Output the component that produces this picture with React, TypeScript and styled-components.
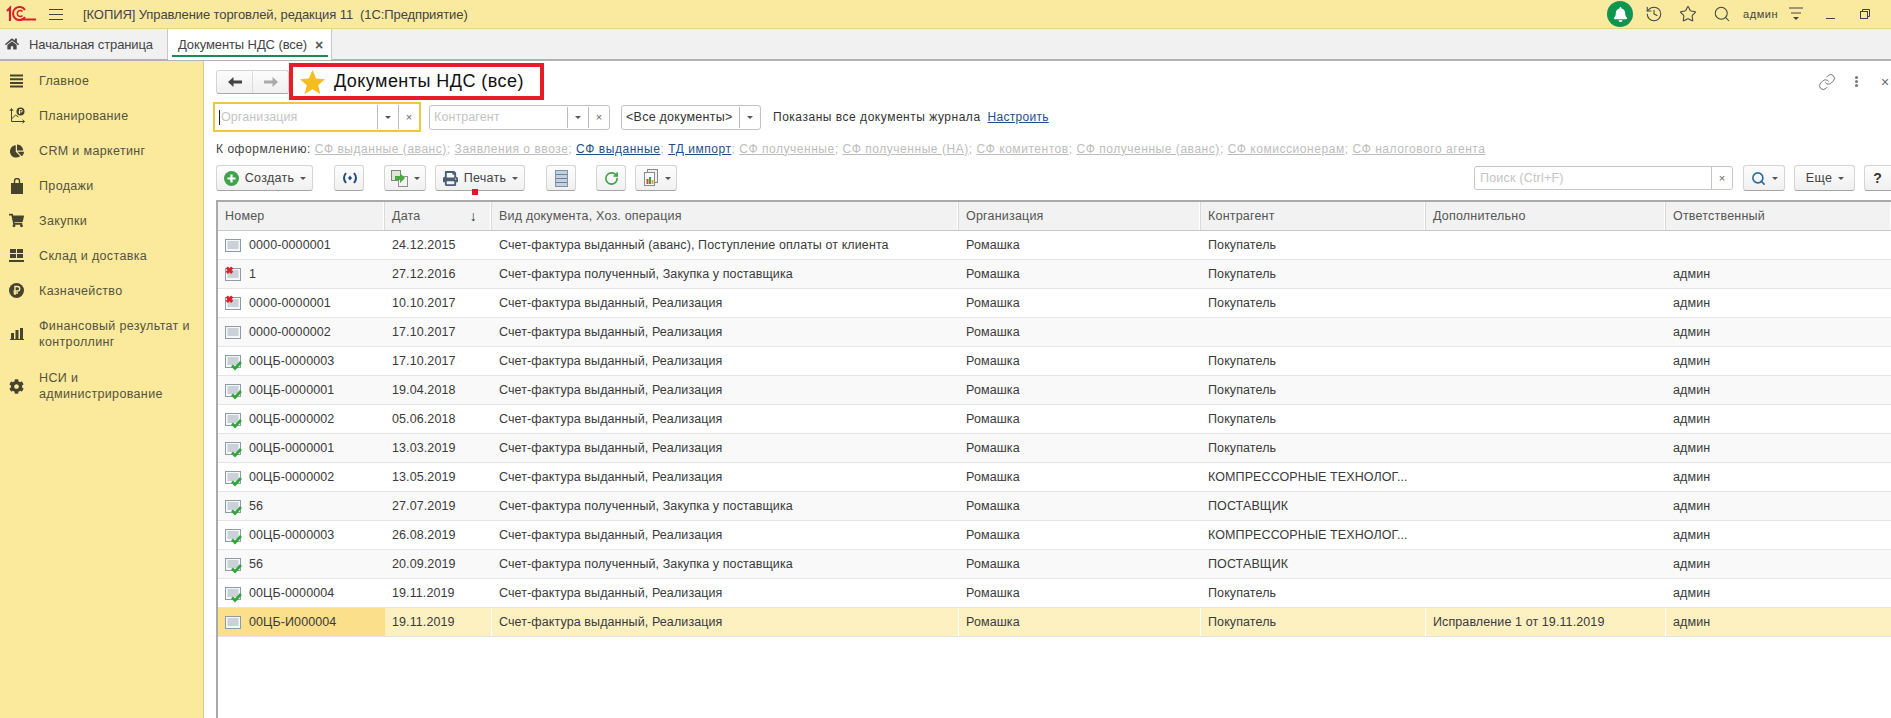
import React from "react";
import styled, { createGlobalStyle } from "styled-components";
import { FaHome, FaShoppingCart, FaChartPie, FaCog, FaPrint, FaBell } from "react-icons/fa";
import { Link, Search, History, RotateCw, Star } from "lucide-react";

const Global = createGlobalStyle`
  html, body { margin: 0; padding: 0; width: 1891px; height: 718px; overflow: hidden; background: #fff; }
  body { font-family: "Liberation Sans", Arial, sans-serif; font-size: 12.5px; color: #333; }
  * { box-sizing: border-box; }
`;

const Page = styled.div`
  width: 1891px; height: 718px; display: flex; flex-direction: column; overflow: hidden;
`;
const TitleBar = styled.header`
  height: 29px; flex: none; background: #f9ea9f; border-bottom: 1px solid #e5d487;
  display: flex; align-items: center; color: #444; font-size: 13px; letter-spacing: -.09px;
`;
const Logo = styled.svg` width: 30px; height: 18px; margin-left: 6px; flex: none; `;
const Burger = styled.span`
  width: 14px; height: 11px; margin-left: 13px; margin-right: 20px; flex: none;
  border-top: 1px solid #444; border-bottom: 1px solid #444; position: relative;
  &::after { content: ""; position: absolute; left: 0; right: 0; top: 4px; height: 1px; background: #444; }
`;
const TitleText = styled.span` white-space: pre; `;
const TitleRight = styled.div` margin-left: auto; display: flex; align-items: center; height: 100%; position: relative; `;
const BellCircle = styled.span`
  width: 26px; height: 26px; border-radius: 50%; background: #0e9650; color: #fff;
  display: flex; align-items: center; justify-content: center; margin-right: 11px;
`;
const TopIcon = styled.span`
  width: 20px; display: flex; justify-content: center; margin-right: 14px; color: #444;
`;
const UserName = styled.span` font-size: 11px; letter-spacing: .55px; width: 32px; margin-left: -3px; margin-right: 13px; `;
const FilterLines = styled.svg` width: 16px; height: 16px; margin-right: 22px; `;
const Minimize = styled.span` width: 9px; height: 1px; background: #444; margin-top: 8px; margin-right: 25px; `;
const Restore = styled.svg` width: 10px; height: 10px; margin-right: 21px; `;

const TabBar = styled.nav`
  height: 32px; flex: none; background: #f1f1f1; border-bottom: 2px solid #b2b2b2;
  display: flex; font-size: 13px; letter-spacing: -.1px; color: #444; white-space: nowrap;
`;
const HomeTab = styled.div`
  width: 168px; display: flex; align-items: center; padding-left: 5px; gap: 10px;
  color: #4a4a4a; border-right: 1px solid #c9c9c9;
`;
const HomeLabel = styled.span` color: #444; `;
const ActiveTab = styled.div`
  width: 164px; background: #fff; position: relative; display: flex; align-items: center;
  padding-left: 10px; border-right: 1px solid #c9c9c9; margin-bottom: -1px;
  &::after { content: ""; position: absolute; left: 4px; right: 3px; bottom: 3px; height: 2px; background: #1c8a55; }
`;
const TabClose = styled.span` margin-left: 8px; font-size: 14px; font-weight: 700; color: #555; `;

const Body = styled.div` flex: 1; display: flex; min-height: 0; `;
const Side = styled.aside`
  width: 204px; flex: none; background: #fbea9b; border-right: 1px solid #d5c98a;
  padding-top: 2px; color: #55523f;
`;
const SideItem = styled.div<{ $tall?: boolean }>`
  height: ${p => (p.$tall ? 52 : 35)}px; display: flex; align-items: center; padding-left: 9px;
  font-size: 12.5px; letter-spacing: .35px; line-height: 16px;
`;
const SideIcon = styled.span`
  width: 15px; height: 15px; flex: none; margin-right: 15px; display: flex; align-items: center; justify-content: center; color: #46432f;
`;

const Main = styled.main` flex: 1; min-width: 0; display: flex; flex-direction: column; padding-left: 12px; `;
const HeadRow = styled.div` height: 41px; flex: none; display: flex; align-items: center; position: relative; `;
const NavGroup = styled.div`
  width: 73px; height: 24px; display: flex; border-radius: 3px;
  background: linear-gradient(#fcfcfc, #f0f0f0); border: 1px solid #d4d4d4; border-bottom-color: #a9a9a9;
`;
const NavBtn = styled.span<{ $off?: boolean }>`
  flex: 1; display: flex; align-items: center; justify-content: center;
  color: ${p => (p.$off ? "#aaa" : "#444")};
  & + & { border-left: 1px solid #dcdcdc; }
`;
const TitleBox = styled.div`
  width: 255px; height: 37px; border: 4px solid #e81c26; display: flex; align-items: center;
  padding-left: 7px; background: #fff;
`;
const TitleStar = styled.svg` width: 25px; height: 24px; margin-right: 9px; flex: none; `;
const TitleH = styled.h1` margin: 0; font-weight: 400; font-size: 18px; color: #111; letter-spacing: .45px; white-space: nowrap; `;
const HeadTools = styled.div` position: absolute; right: 0; top: 0; height: 100%; display: flex; align-items: center; color: #666; `;
const Dots = styled.span`
  width: 3px; height: 3px; border-radius: 50%; background: #777; box-shadow: 0 -4px 0 #777, 0 4px 0 #777; margin: 0 23px 0 19px;
`;
const CloseX = styled.span` width: 10px; font-size: 14px; `;

const FilterRow = styled.div` height: 30px; flex: none; display: flex; align-items: center; margin-left: -3px; `;
const Field = styled.div<{ $w: number; $focus?: boolean; $mr?: number }>`
  width: ${p => p.$w}px; height: ${p => (p.$focus ? 30 : 25)}px; flex: none;
  margin-right: ${p => p.$mr ?? 0}px; display: flex; align-items: center; background: #fff;
  border: ${p => (p.$focus ? "2px solid #efc63f" : "1px solid #c2c2c2")};
  border-radius: ${p => (p.$focus ? 0 : 3)}px;
`;
const FieldText = styled.span<{ $ph?: boolean }>`
  flex: 1; padding-left: 4px; font-size: 12.5px; letter-spacing: ${p => (p.$ph ? ".1px" : ".25px")}; white-space: nowrap; overflow: hidden;
  color: ${p => (p.$ph ? "#c4c4c4" : "#333")};
`;
const FieldCaret = styled.i` width: 1px; height: 15px; background: #222; margin-left: 4px; margin-right: -3px; `;
const FieldBtn = styled.span`
  width: 21px; height: calc(100% - 2px); border-left: 1px solid #bcbcbc; display: flex; align-items: center; justify-content: center;
  color: #666; font-size: 11px; flex: none;
`;
const Tri = styled.i`
  width: 0; height: 0; border-left: 3px solid transparent; border-right: 3px solid transparent; border-top: 3px solid #555;
`;
const Note = styled.span` margin-left: 12px; color: #333; font-size: 12px; white-space: nowrap; letter-spacing: .52px; `;
const BlueLink = styled.a` color: #1e4f8c; text-decoration: underline; margin-left: 7px; font-size: 12px; letter-spacing: .28px; `;

const LinksRow = styled.div` height: 33px; flex: none; display: flex; align-items: center; font-size: 12px; letter-spacing: .54px; white-space: pre; color: #bbb; `;
const LinksLabel = styled.span` color: #444; `;
const DocLink = styled.span<{ $on?: boolean }>`
  color: ${p => (p.$on ? "#1e4f8c" : "#bdbdbd")}; text-decoration: underline;
`;

const Toolbar = styled.div` height: 26px; flex: none; display: flex; align-items: stretch; margin-bottom: 9px; `;
const Btn = styled.button<{ $w: number; $ml?: number }>`
  width: ${p => p.$w}px; margin-left: ${p => p.$ml ?? 0}px; flex: none; padding: 0 0 0 1px; height: 26px;
  display: flex; align-items: center; justify-content: center; gap: 6px; position: relative;
  background: linear-gradient(#fdfdfd, #f0f0f0); border: 1px solid #d4d4d4; border-bottom: 1px solid #a5a5a5;
  border-radius: 3px; font: 12.5px "Liberation Sans", Arial, sans-serif; letter-spacing: .3px; color: #444;
`;
const RedMark = styled.span` position: absolute; left: 36px; bottom: -5px; width: 6px; height: 6px; background: #e8132a; `;
const SearchBox = styled.div`
  margin-left: auto; width: 259px; height: 24px; align-self: center; display: flex; border: 1px solid #c6c6c6; border-radius: 3px; align-items: stretch;
`;
const SearchInput = styled.span` flex: 1; color: #c4c4c4; font-size: 12.5px; padding-left: 5px; display: flex; align-items: center; letter-spacing: .2px; `;
const SearchX = styled.span` width: 21px; border-left: 1px solid #c6c6c6; display: flex; align-items: center; justify-content: center; color: #666; font-size: 11px; `;
const Help = styled.button`
  width: 32px; flex: none; margin-left: 9px; margin-right: -5px; height: 26px; background: linear-gradient(#fdfdfd, #f0f0f0);
  border: 1px solid #d4d4d4; border-bottom: 1px solid #a5a5a5; border-radius: 3px; font: 700 14px "Liberation Sans", Arial, sans-serif; color: #333; padding: 0 5px 0 0;
`;

const COLS = "167px 107px 467px 242px 225px 240px 226px";
const Table = styled.section`
  flex: 1; min-height: 0; border-top: 2px solid #aaa; border-left: 2px solid #aaa;
`;
const HeaderRow = styled.div`
  display: grid; grid-template-columns: ${COLS}; height: 29px; background: #f2f2f2; border-bottom: 1px solid #c8c8c8;
`;
const HeadCell = styled.div`
  display: flex; align-items: center; justify-content: space-between; padding: 0 14px 0 7px; border-right: 1px solid #d9d9d9; box-shadow: inset -1px 0 #fff;
  color: #555; font-size: 12.5px; letter-spacing: .2px;
`;
const SortArrow = styled.span` font-size: 14px; color: #333; `;
const Row = styled.div<{ $alt?: boolean; $sel?: boolean }>`
  display: grid; grid-template-columns: ${COLS}; height: 29px; border-bottom: 1px solid #e4e4e4;
  background: ${p => (p.$sel ? "#fdf1c2" : p.$alt ? "#f9f9f9" : "#fff")};
`;
const Cell = styled.div<{ $cur?: boolean; $sel?: boolean }>`
  display: flex; align-items: center; padding-left: 7px; font-size: 12.5px; letter-spacing: .1px; color: #3a3a3a; white-space: nowrap; overflow: hidden;
  background: ${p => (p.$cur ? "#fbdf8a" : "transparent")};
  border-right: 1px solid ${p => (p.$sel ? "#fff" : "transparent")};
`;
const DocIconWrap = styled.svg` width: 17px; height: 15px; flex: none; margin-right: 7px; overflow: visible; `;

type St = "plain" | "del" | "ok";
const DocIcon = ({ s }: { s: St }) => (
  <DocIconWrap viewBox="0 0 17 15">
    <rect x="0.5" y="1.5" width="15" height="12" fill="#f5f7f9" stroke="#8e9ca8" />
    <path d="M2.5 4h11M2.5 6h11M2.5 8h11M2.5 10h11" stroke="#9fabb6" strokeWidth="1" />
    {s === "del" && <path d="M1.8 0.5l5.4 5.4M7.2 0.5l-5.4 5.4" stroke="#d8232c" strokeWidth="3" />}
    {s === "ok" && <path d="M7 11.5l3 3 6-6.5" fill="none" stroke="#2fa53a" strokeWidth="2.6" />}
  </DocIconWrap>
);

const rows: [St, string, string, string, string, string, string][] = [
  ["plain", "0000-0000001", "24.12.2015", "Счет-фактура выданный (аванс), Поступление оплаты от клиента", "Покупатель", "", ""],
  ["del", "1", "27.12.2016", "Счет-фактура полученный, Закупка у поставщика", "Покупатель", "", "админ"],
  ["del", "0000-0000001", "10.10.2017", "Счет-фактура выданный, Реализация", "Покупатель", "", "админ"],
  ["plain", "0000-0000002", "17.10.2017", "Счет-фактура выданный, Реализация", "", "", "админ"],
  ["ok", "00ЦБ-0000003", "17.10.2017", "Счет-фактура выданный, Реализация", "Покупатель", "", "админ"],
  ["ok", "00ЦБ-0000001", "19.04.2018", "Счет-фактура выданный, Реализация", "Покупатель", "", "админ"],
  ["ok", "00ЦБ-0000002", "05.06.2018", "Счет-фактура выданный, Реализация", "Покупатель", "", "админ"],
  ["ok", "00ЦБ-0000001", "13.03.2019", "Счет-фактура выданный, Реализация", "Покупатель", "", "админ"],
  ["ok", "00ЦБ-0000002", "13.05.2019", "Счет-фактура выданный, Реализация", "КОМПРЕССОРНЫЕ ТЕХНОЛОГ...", "", "админ"],
  ["ok", "56", "27.07.2019", "Счет-фактура полученный, Закупка у поставщика", "ПОСТАВЩИК", "", "админ"],
  ["ok", "00ЦБ-0000003", "26.08.2019", "Счет-фактура выданный, Реализация", "КОМПРЕССОРНЫЕ ТЕХНОЛОГ...", "", "админ"],
  ["ok", "56", "20.09.2019", "Счет-фактура полученный, Закупка у поставщика", "ПОСТАВЩИК", "", "админ"],
  ["ok", "00ЦБ-0000004", "19.11.2019", "Счет-фактура выданный, Реализация", "Покупатель", "", "админ"],
  ["plain", "00ЦБ-И000004", "19.11.2019", "Счет-фактура выданный, Реализация", "Покупатель", "Исправление 1 от 19.11.2019", "админ"],
];

const MainIcon = () => (
  <svg width="15" height="14" viewBox="0 0 15 14"><path d="M1 1.5h13M1 5.2h13M1 8.9h13M1 12.5h13" stroke="#46432f" strokeWidth="2" /></svg>
);
const PlanIcon = () => (
  <svg width="16" height="17" viewBox="0 0 16 17" fill="none" stroke="#46432f" style={{ flex: "none" }}>
    <path d="M2.5 2v12.5H15.5" /><path d="M0.8 4l1.7-2.5L4.2 4M13.5 12.8l2 1.7-2 1.7" /><path d="M2.5 12l4-4 3 2" />
    <circle cx="11.5" cy="4.5" r="4" fill="#46432f" stroke="none" /><path d="M10.5 7V2.5h1.5a1.2 1.2 0 0 1 0 2.5H9.5" stroke="#fbea9b" />
  </svg>
);
const BagIcon = () => (
  <svg width="14" height="16" viewBox="0 0 14 16"><path d="M1 5h12v11H1z" fill="#46432f" /><path d="M4.5 7V3a2.5 2.5 0 0 1 5 0v4" fill="none" stroke="#46432f" strokeWidth="1.4" /></svg>
);
const GridIcon = () => (
  <svg width="15" height="14" viewBox="0 0 15 14" fill="#46432f"><rect x="1" y="0" width="6" height="4" /><rect x="8" y="0" width="6" height="4" /><rect x="1" y="5" width="6" height="4" /><rect x="8" y="5" width="6" height="4" /><rect x="0" y="11" width="15" height="2" /></svg>
);
const RubIcon = () => (
  <svg width="15" height="15" viewBox="0 0 15 15"><circle cx="7.5" cy="7.5" r="7.5" fill="#46432f" /><path d="M6 12V3.5h2.5a2.2 2.2 0 0 1 0 4.5H4.5M4.5 10H9" fill="none" stroke="#fbea9b" strokeWidth="1.4" /></svg>
);
const BarsIcon = () => (
  <svg width="14" height="12" viewBox="0 0 14 12" fill="#46432f"><rect x="1" y="5" width="3" height="6" /><rect x="5.5" y="2" width="3" height="9" /><rect x="10" y="0" width="3" height="11" /><rect x="0" y="11" width="14" height="1" /></svg>
);

const nav: { i: React.ReactNode; t: React.ReactNode; tall?: boolean }[] = [
  { i: <MainIcon />, t: "Главное" },
  { i: <PlanIcon />, t: "Планирование" },
  { i: <FaChartPie size={14} />, t: "CRM и маркетинг" },
  { i: <BagIcon />, t: "Продажи" },
  { i: <FaShoppingCart size={15} />, t: "Закупки" },
  { i: <GridIcon />, t: "Склад и доставка" },
  { i: <RubIcon />, t: "Казначейство" },
  { i: <BarsIcon />, t: <>Финансовый результат и<br />контроллинг</>, tall: true },
  { i: <FaCog size={15} />, t: <>НСИ и<br />администрирование</>, tall: true },
];

const links: [string, boolean][] = [
  ["СФ выданные (аванс)", false], ["Заявления о ввозе", false], ["СФ выданные", true], ["ТД импорт", true],
  ["СФ полученные", false], ["СФ полученные (НА)", false], ["СФ комитентов", false], ["СФ полученные (аванс)", false],
  ["СФ комиссионерам", false], ["СФ налогового агента", false],
];

const ArrowSvg = styled.svg<{ $flip?: boolean }>`
  width: 14px; height: 10px; transform: ${p => (p.$flip ? "scaleX(-1)" : "none")};
`;
const Arrow = ({ back }: { back?: boolean }) => (
  <ArrowSvg viewBox="0 0 14 10" $flip={!back}>
    <path d="M5.5 0L0 5l5.5 5V6.5H14v-3H5.5z" fill="currentColor" />
  </ArrowSvg>
);

export default function App() {
  return (
    <Page>
      <Global />
      <TitleBar>
        <Logo viewBox="0 0 30 18">
          <path d="M1 6l3-3v13" fill="none" stroke="#d5202a" strokeWidth="2.2" />
          <path d="M19 5A6.5 6.5 0 1 0 19 12" fill="none" stroke="#d5202a" strokeWidth="2" />
          <path d="M16.5 6.5a3 3 0 1 0 0 4" fill="none" stroke="#d5202a" strokeWidth="1.5" />
          <path d="M15 14.5h15" stroke="#d5202a" strokeWidth="2" />
        </Logo>
        <Burger />
        <TitleText>[КОПИЯ] Управление торговлей, редакция 11  (1С:Предприятие)</TitleText>
        <TitleRight>
          <BellCircle><FaBell size={15} /></BellCircle>
          <TopIcon><History size={18} strokeWidth={1.4} /></TopIcon>
          <TopIcon><Star size={18} strokeWidth={1.4} /></TopIcon>
          <TopIcon><Search size={18} strokeWidth={1.4} /></TopIcon>
          <UserName>админ</UserName>
          <FilterLines viewBox="0 0 16 16"><path d="M1 2h14M3 7h10" stroke="#444" /><path d="M5 11h6l-3 3z" fill="#444" /></FilterLines>
          <Minimize />
          <Restore viewBox="0 0 10 10" fill="none" stroke="#444"><rect x="0.5" y="2.5" width="7" height="7" /><path d="M2.5 2.5v-2h7v7h-2" /></Restore>
        </TitleRight>
      </TitleBar>
      <TabBar>
        <HomeTab><FaHome size={14} /><HomeLabel>Начальная страница</HomeLabel></HomeTab>
        <ActiveTab>Документы НДС (все)<TabClose>×</TabClose></ActiveTab>
      </TabBar>
      <Body>
        <Side>
          {nav.map((n, k) => (
            <SideItem key={k} $tall={n.tall}><SideIcon>{n.i}</SideIcon><span>{n.t}</span></SideItem>
          ))}
        </Side>
        <Main>
          <HeadRow>
            <NavGroup>
              <NavBtn><Arrow back /></NavBtn>
              <NavBtn $off><Arrow /></NavBtn>
            </NavGroup>
            <TitleBox>
              <TitleStar viewBox="0 0 25 24"><path d="M12.5 0l3.6 8.6 8.9.7-6.8 5.9 2.1 8.8-7.8-4.8-7.8 4.8 2.1-8.8L0 9.3l8.9-.7z" fill="#f5bd22" /></TitleStar>
              <TitleH>Документы НДС (все)</TitleH>
            </TitleBox>
            <HeadTools>
              <Link size={18} strokeWidth={1.2} />
              <Dots />
              <CloseX>×</CloseX>
            </HeadTools>
          </HeadRow>
          <FilterRow>
            <Field $w={208} $focus $mr={8}>
              <FieldCaret /><FieldText $ph>Организация</FieldText>
              <FieldBtn><Tri /></FieldBtn><FieldBtn>×</FieldBtn>
            </Field>
            <Field $w={181} $mr={11}>
              <FieldText $ph>Контрагент</FieldText>
              <FieldBtn><Tri /></FieldBtn><FieldBtn>×</FieldBtn>
            </Field>
            <Field $w={140}>
              <FieldText>&lt;Все документы&gt;</FieldText>
              <FieldBtn><Tri /></FieldBtn>
            </Field>
            <Note>Показаны все документы журнала</Note>
            <BlueLink>Настроить</BlueLink>
          </FilterRow>
          <LinksRow>
            <LinksLabel>К оформлению: </LinksLabel>
            {links.map(([t, on], k) => (
              <React.Fragment key={t}>
                <DocLink $on={on}>{t}</DocLink>{k < links.length - 1 ? "; " : ""}
              </React.Fragment>
            ))}
          </LinksRow>
          <Toolbar>
            <Btn $w={97}>
              <svg width="15" height="15" viewBox="0 0 15 15"><circle cx="7.5" cy="7.5" r="7.5" fill="#3fa34d" /><path d="M7.5 3.5v8M3.5 7.5h8" stroke="#fff" strokeWidth="2.2" /></svg>
              Создать <Tri />
            </Btn>
            <Btn $w={30} $ml={21}>
              <svg width="16" height="12" viewBox="0 0 16 12" fill="none" stroke="#234a7d" strokeWidth="2"><path d="M4 1Q0 6 4 11M12 1q4 5 0 10" /><path d="M8 3.5L10 6 8 8.5 6 6z" fill="#234a7d" stroke="none" /></svg>
            </Btn>
            <Btn $w={42} $ml={20}>
              <svg width="17" height="17" viewBox="0 0 17 17"><rect x="0.5" y="0.5" width="9" height="10" fill="#dfe6d8" stroke="#7c8a76" /><rect x="7.5" y="6.5" width="9" height="10" fill="#f3f3f3" stroke="#8f8f8f" /><path d="M4 6h5V3l5 5-5 5v-3H4z" fill="#4ba943" /></svg>
              <Tri />
            </Btn>
            <Btn $w={90} $ml={9}>
              <FaPrint size={15} color="#4a5f73" />
              Печать <Tri />
              <RedMark />
            </Btn>
            <Btn $w={30} $ml={21}>
              <svg width="13" height="17" viewBox="0 0 13 17"><rect x="0.5" y="0.5" width="12" height="16" fill="#c4d0dc" stroke="#7f93a8" /><path d="M1 4.5h11M1 8.5h11M1 12.5h11" stroke="#6d8299" /></svg>
            </Btn>
            <Btn $w={30} $ml={20}><RotateCw size={15} color="#3ba341" strokeWidth={2.6} /></Btn>
            <Btn $w={42} $ml={9}>
              <svg width="16" height="18" viewBox="0 0 16 18"><rect x="4.5" y="0.5" width="10" height="13" fill="#eee" stroke="#8a8a8a" /><rect x="1.5" y="3.5" width="10" height="13" fill="#f8f8f8" stroke="#8a8a8a" /><rect x="3.5" y="10" width="2" height="5" fill="#d8462c" /><rect x="6" y="8" width="2" height="7" fill="#3ca33f" /><rect x="8.5" y="11" width="2" height="4" fill="#e3a92a" /></svg>
              <Tri />
            </Btn>
            <SearchBox>
              <SearchInput>Поиск (Ctrl+F)</SearchInput>
              <SearchX>×</SearchX>
            </SearchBox>
            <Btn $w={42} $ml={10}><Search size={15} color="#2b6ca3" strokeWidth={2.6} /><Tri /></Btn>
            <Btn $w={61} $ml={9}>Еще <Tri /></Btn>
            <Help>?</Help>
          </Toolbar>
          <Table>
            <HeaderRow>
              <HeadCell>Номер</HeadCell>
              <HeadCell>Дата<SortArrow>↓</SortArrow></HeadCell>
              <HeadCell>Вид документа, Хоз. операция</HeadCell>
              <HeadCell>Организация</HeadCell>
              <HeadCell>Контрагент</HeadCell>
              <HeadCell>Дополнительно</HeadCell>
              <HeadCell>Ответственный</HeadCell>
            </HeaderRow>
            {rows.map((r, k) => {
              const sel = k === rows.length - 1;
              return (
                <Row key={k} $alt={k % 2 === 1} $sel={sel}>
                  <Cell $cur={sel}><DocIcon s={r[0]} />{r[1]}</Cell>
                  <Cell $sel={sel}>{r[2]}</Cell>
                  <Cell $sel={sel}>{r[3]}</Cell>
                  <Cell $sel={sel}>Ромашка</Cell>
                  <Cell $sel={sel}>{r[4]}</Cell>
                  <Cell $sel={sel}>{r[5]}</Cell>
                  <Cell $sel={sel}>{r[6]}</Cell>
                </Row>
              );
            })}
          </Table>
        </Main>
      </Body>
    </Page>
  );
}
